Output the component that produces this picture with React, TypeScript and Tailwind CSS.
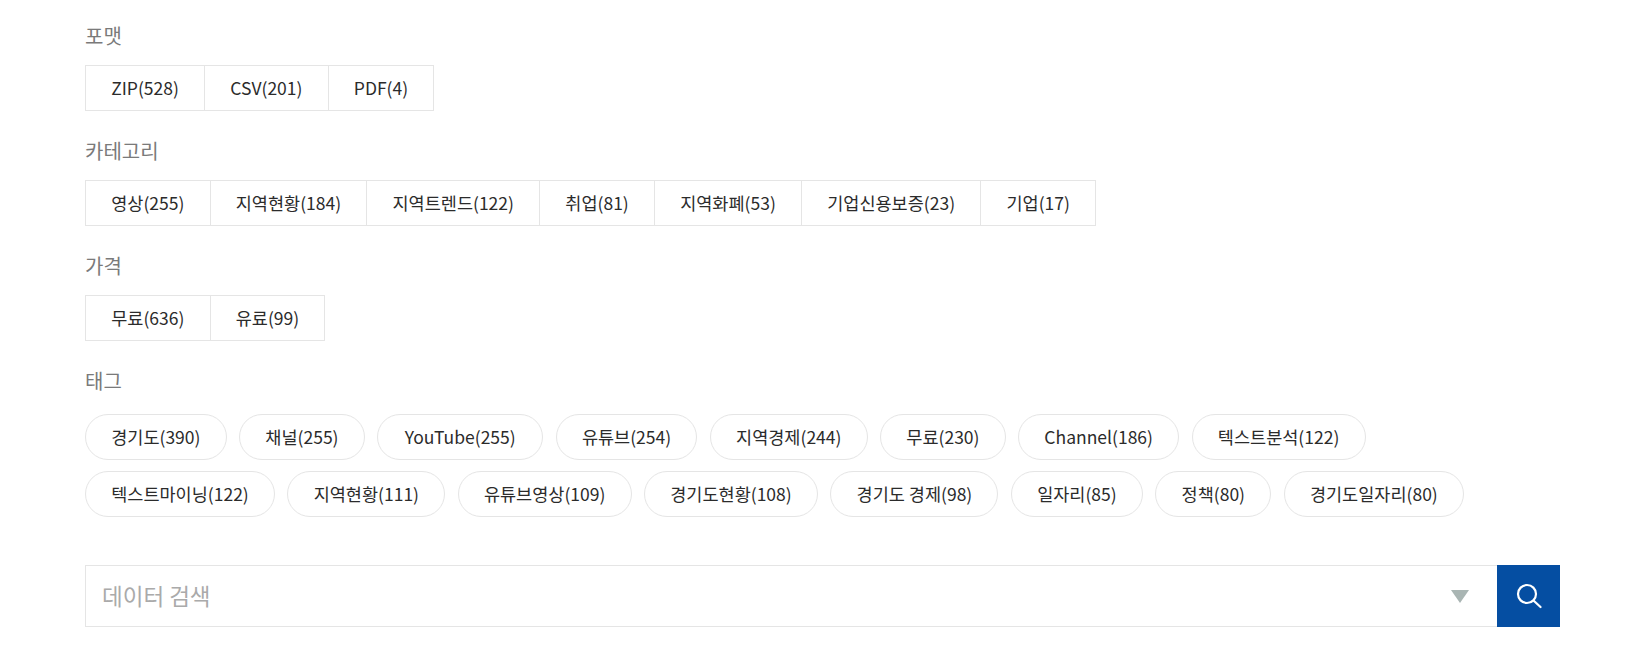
import React from 'react'

const filterGroups = [
  { title: '포맷', items: ['ZIP(528)', 'CSV(201)', 'PDF(4)'] },
  {
    title: '카테고리',
    items: ['영상(255)', '지역현황(184)', '지역트렌드(122)', '취업(81)', '지역화폐(53)', '기업신용보증(23)', '기업(17)'],
  },
  { title: '가격', items: ['무료(636)', '유료(99)'] },
]

const tags = [
  '경기도(390)', '채널(255)', 'YouTube(255)', '유튜브(254)', '지역경제(244)', '무료(230)', 'Channel(186)', '텍스트분석(122)',
  '텍스트마이닝(122)', '지역현황(111)', '유튜브영상(109)', '경기도현황(108)', '경기도 경제(98)', '일자리(85)', '정책(80)', '경기도일자리(80)',
]

const App = () => {
  return (
    <div className="w-[1638px] h-[650px] bg-white overflow-hidden font-['Noto_Sans_CJK_KR','Noto_Sans',sans-serif] text-[17.5px] text-[#2b2b2b]">
      <div className="pl-[85px] pr-[78px]">
        <div className="pt-[21px]">
          {filterGroups.map((group) => (
            <div key={group.title} className="h-[115px]">
              <h3 className="h-[30px] leading-[30px] text-[20px] font-normal text-[#7a7a7a]">{group.title}</h3>
              <ul className="mt-[14px] flex w-fit h-[46px] border border-[#e5e5e5]">
                {group.items.map((item) => (
                  <li key={item} className="px-[25.2px] leading-[44px] border-l border-[#e5e5e5] first:border-l-0">
                    {item}
                  </li>
                ))}
              </ul>
            </div>
          ))}
          <h3 className="h-[30px] leading-[30px] text-[20px] font-normal text-[#7a7a7a]">태그</h3>
        </div>

        <ul className="mt-[18px] flex flex-wrap gap-x-[12.5px] gap-y-[11px] w-[1400px]">
          {tags.map((tag) => (
            <li key={tag} className="h-[46px] px-[25.2px] [&:nth-child(3)]:px-[26.5px] leading-[44px] border border-[#e5e5e5] rounded-full">
              {tag}
            </li>
          ))}
        </ul>

        <div className="mt-[48px] flex h-[62px]">
          <div className="flex-1 flex items-center justify-between border border-[#e5e5e5] border-r-0 pl-[16px] pr-[28px]">
            <span className="text-[22.5px] text-[#aaa]">데이터 검색</span>
            <svg width="18" height="13" viewBox="0 0 18 13">
              <path d="M0 0h18l-9 13z" fill="#a9b5b3" />
            </svg>
          </div>
          <button className="w-[63px] bg-[#054ea2] flex items-center justify-center">
            <svg width="26" height="26" viewBox="0 0 26 26" fill="none" stroke="#fff" strokeWidth="2.2" strokeLinecap="round">
              <circle cx="11" cy="11" r="9" />
              <path d="M18 18l6.5 6" />
            </svg>
          </button>
        </div>
      </div>
    </div>
  )
}

export default App
